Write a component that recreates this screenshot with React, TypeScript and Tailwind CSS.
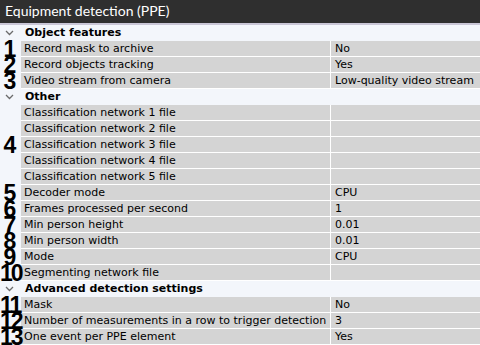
import React from "react";

type Row = { label: string; value?: string };

type Section = {
  title: string;
  groups: { num: string; rows: Row[] }[];
};

const sections: Section[] = [
  {
    title: "Object features",
    groups: [
      { num: "1", rows: [{ label: "Record mask to archive", value: "No" }] },
      { num: "2", rows: [{ label: "Record objects tracking", value: "Yes" }] },
      { num: "3", rows: [{ label: "Video stream from camera", value: "Low-quality video stream" }] },
    ],
  },
  {
    title: "Other",
    groups: [
      {
        num: "4",
        rows: [
          { label: "Classification network 1 file" },
          { label: "Classification network 2 file" },
          { label: "Classification network 3 file" },
          { label: "Classification network 4 file" },
          { label: "Classification network 5 file" },
        ],
      },
      { num: "5", rows: [{ label: "Decoder mode", value: "CPU" }] },
      { num: "6", rows: [{ label: "Frames processed per second", value: "1" }] },
      { num: "7", rows: [{ label: "Min person height", value: "0.01" }] },
      { num: "8", rows: [{ label: "Min person width", value: "0.01" }] },
      { num: "9", rows: [{ label: "Mode", value: "CPU" }] },
      { num: "10", rows: [{ label: "Segmenting network file" }] },
    ],
  },
  {
    title: "Advanced detection settings",
    groups: [
      { num: "11", rows: [{ label: "Mask", value: "No" }] },
      { num: "12", rows: [{ label: "Number of measurements in a row to trigger detection", value: "3" }] },
      { num: "13", rows: [{ label: "One event per PPE element", value: "Yes" }] },
    ],
  },
];

const Chevron = () => (
  <svg width="9" height="6" viewBox="0 0 9 6" className="text-[#6b6b6b]">
    <path d="M1 1l3.5 3.5L8 1" fill="none" stroke="currentColor" strokeWidth="1.3" />
  </svg>
);

const SettingRow = ({ row }: { row: Row }) => (
  <div className="flex h-4 border-b border-white bg-[#d4d4d4]">
    <div className="w-[310px] shrink-0 border-r border-white pl-[3px] leading-[15px] whitespace-nowrap">
      {row.label}
    </div>
    <div className="flex-1 pl-1 leading-[15px] whitespace-nowrap">{row.value}</div>
  </div>
);

export default function App() {
  return (
    <div
      className="w-[480px] h-[345px] overflow-hidden bg-[#f3f6fb] text-[11px] text-black"
      style={{ fontFamily: "'DejaVu Sans', Verdana, sans-serif" }}
    >
      <div
        className="h-[25px] bg-[#2f2f2f] border-b-2 border-[#c9c6d6] pl-[5px] text-[14px] leading-[22px] text-white"
        style={{ fontFamily: "Lato, 'Noto Sans', sans-serif" }}
      >
        Equipment detection (PPE)
      </div>

      {sections.map((section) => (
        <div key={section.title}>
          <div className="flex h-4 items-center">
            <div className="w-[21px] flex justify-center pr-[2px]">
              <Chevron />
            </div>
            <span className="font-bold pl-[4px] leading-4">{section.title}</span>
          </div>

          {section.groups.map((group) => (
            <div key={group.num} className="flex">
              <div className="relative w-[21px] shrink-0">
                <span
                  className="absolute left-0 right-0 top-1/2 -translate-y-1/2 text-center font-bold text-[23px] leading-none tracking-[-2px] text-black pr-[3px]"
                  style={{ fontFamily: "'Liberation Sans', Arial, sans-serif" }}
                >
                  {group.num}
                </span>
              </div>
              <div className="flex-1">
                {group.rows.map((row) => (
                  <SettingRow key={row.label} row={row} />
                ))}
              </div>
            </div>
          ))}
        </div>
      ))}
    </div>
  );
}
